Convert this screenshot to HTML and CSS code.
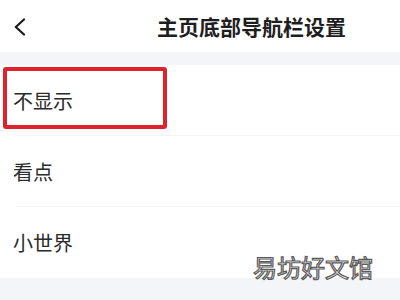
FILE: index.html
```html
<!DOCTYPE html>
<html lang="zh-CN">
<head>
<meta charset="utf-8">
<link rel="stylesheet" href="styles.css">
</head>
<body>
<div class="page">
  <header class="bar">
    <svg class="back" width="13" height="18" viewBox="0 0 13 18"><path d="M11 1.5 L2.8 9 L11 16.5" fill="none" stroke="#1a1a1a" stroke-width="2.2" stroke-linecap="round" stroke-linejoin="round"/></svg>
    <h1 class="title">主页底部导航栏设置</h1>
  </header>
  <div class="gap"></div>
  <ul class="list">
    <li class="item first"><span class="hl"></span><span class="label">不显示</span></li>
    <li class="item"><span class="label">看点</span></li>
    <li class="item last"><span class="label">小世界</span></li>
  </ul>
  <div class="foot"></div>
  <div class="mark">易坊好文馆</div>
</div>
</body>
</html>
```
FILE: styles.css
```css
html, body { margin: 0; padding: 0; }
body {
  width: 400px; height: 300px; overflow: hidden;
  background: #f4f5f9;
  font-family: "Noto Sans CJK SC", "Noto Sans", sans-serif;
  color: #2a2a2a;
}
.page { position: relative; width: 400px; height: 300px; }
.bar {
  height: 52px; background: #fff;
  display: flex; align-items: center;
  padding-left: 13px; box-sizing: border-box;
}
.back { display: block; margin-top: 2px; }
.title {
  margin: 0 0 0 131px;
  font-size: 21px; font-weight: 700; color: #1e1e1e;
  line-height: 1; letter-spacing: 0;
}
.gap { height: 13px; background: #f4f5f9; }
.list { list-style: none; margin: 0; padding: 0; background: #fff; }
.item {
  position: relative;
  height: 71px; display: flex; align-items: center;
  padding-left: 13px;
}
.item::after {
  content: ""; position: absolute; left: 15px; right: 0; bottom: 0;
  height: 1px; background: #f5f5f7;
}
.item.last::after { display: none; }
.label { font-size: 20px; line-height: 1; color: #2b2b2b; }
.first .label { margin-top: 1px; }
.hl {
  position: absolute; left: 3px; top: 2px;
  width: 164px; height: 62px; box-sizing: border-box;
  border: 4px solid #e0222e; border-radius: 3px;
}
.foot { height: 22px; background: #f4f5f9; }
.mark {
  position: absolute; left: 253px; top: 253px;
  font-size: 24px; line-height: 1.2; letter-spacing: 0;
  color: #fff; -webkit-text-stroke: 1.2px #5a5a5a;
  font-weight: 400;
}
```
